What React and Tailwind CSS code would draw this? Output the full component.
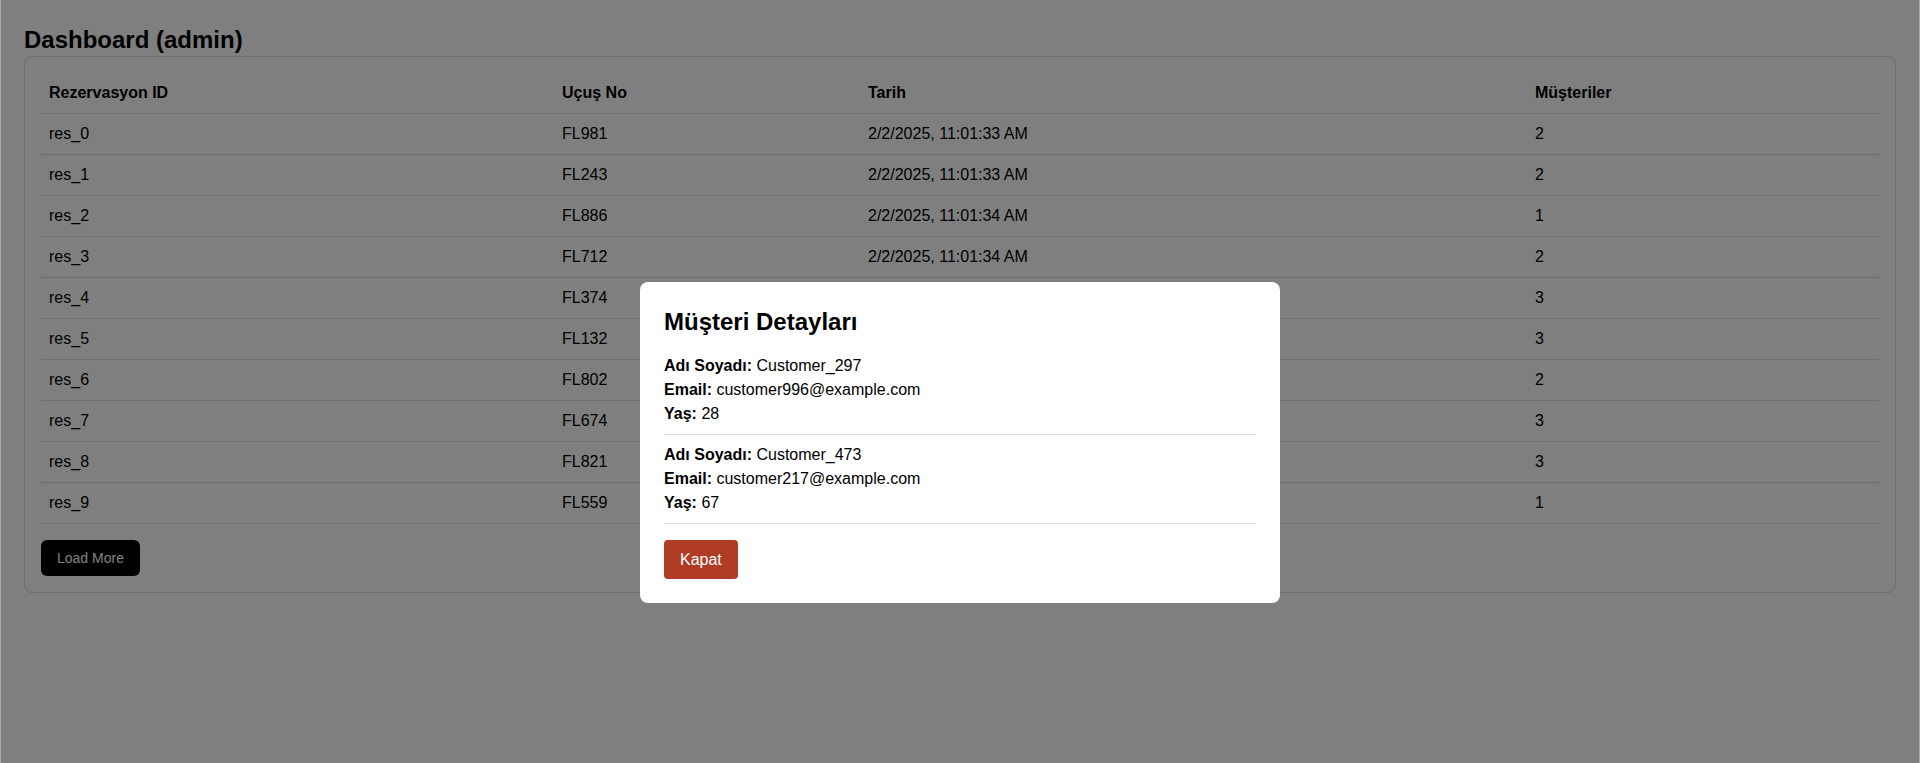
import React from 'react';

const reservations = [
  { id: 'res_0', flight: 'FL981', date: '2/2/2025, 11:01:33 AM', customers: 2 },
  { id: 'res_1', flight: 'FL243', date: '2/2/2025, 11:01:33 AM', customers: 2 },
  { id: 'res_2', flight: 'FL886', date: '2/2/2025, 11:01:34 AM', customers: 1 },
  { id: 'res_3', flight: 'FL712', date: '2/2/2025, 11:01:34 AM', customers: 2 },
  { id: 'res_4', flight: 'FL374', date: '2/2/2025, 11:01:34 AM', customers: 3 },
  { id: 'res_5', flight: 'FL132', date: '2/2/2025, 11:01:34 AM', customers: 3 },
  { id: 'res_6', flight: 'FL802', date: '2/2/2025, 11:01:34 AM', customers: 2 },
  { id: 'res_7', flight: 'FL674', date: '2/2/2025, 11:01:34 AM', customers: 3 },
  { id: 'res_8', flight: 'FL821', date: '2/2/2025, 11:01:34 AM', customers: 3 },
  { id: 'res_9', flight: 'FL559', date: '2/2/2025, 11:01:34 AM', customers: 1 },
];

const customers = [
  { name: 'Customer_297', email: 'customer996@example.com', age: 28 },
  { name: 'Customer_473', email: 'customer217@example.com', age: 67 },
];

const App = () => {
  return (
    <div className="min-h-screen bg-white text-black font-['Liberation_Sans',Arial,sans-serif] border-x border-[#a8a8a8]">
      <div className="pt-6 px-[23px] pb-6">
        <h2 className="text-2xl font-bold">Dashboard (admin)</h2>

        {/* Reservations card */}
        <div className="border border-[#ddd] rounded-lg p-4">
          <table className="w-full table-fixed border-collapse text-base">
            <colgroup>
              <col className="w-[513px]" />
              <col className="w-[306px]" />
              <col className="w-[667px]" />
              <col />
            </colgroup>
            <thead>
              <tr className="border-b border-[#ddd]">
                <th className="p-2 text-left font-bold">Rezervasyon ID</th>
                <th className="p-2 text-left font-bold">Uçuş No</th>
                <th className="p-2 text-left font-bold">Tarih</th>
                <th className="p-2 text-left font-bold">Müşteriler</th>
              </tr>
            </thead>
            <tbody>
              {reservations.map((r) => (
                <tr key={r.id} className="border-b border-[#ddd]">
                  <td className="p-2">{r.id}</td>
                  <td className="p-2">{r.flight}</td>
                  <td className="p-2">{r.date}</td>
                  <td className="p-2">{r.customers}</td>
                </tr>
              ))}
            </tbody>
          </table>
          <button className="mt-4 bg-black text-white text-sm px-4 py-2 rounded-md">Load More</button>
        </div>
      </div>

      {/* Modal overlay */}
      <div className="fixed inset-y-0 left-px right-px bg-black/50 flex justify-center items-start pt-[282px]">
        <div className="w-[640px] bg-white rounded-lg p-6">
          <h2 className="text-2xl font-bold mb-2">Müşteri Detayları</h2>
          {customers.map((c) => (
            <div key={c.email} className="py-2 border-b border-[#ddd]">
              <p><strong>Adı Soyadı:</strong> {c.name}</p>
              <p><strong>Email:</strong> {c.email}</p>
              <p><strong>Yaş:</strong> {c.age}</p>
            </div>
          ))}
          <button className="mt-4 bg-[#b13c26] text-white text-base leading-[19px] px-4 py-[10px] rounded">Kapat</button>
        </div>
      </div>
    </div>
  );
};

export default App;
